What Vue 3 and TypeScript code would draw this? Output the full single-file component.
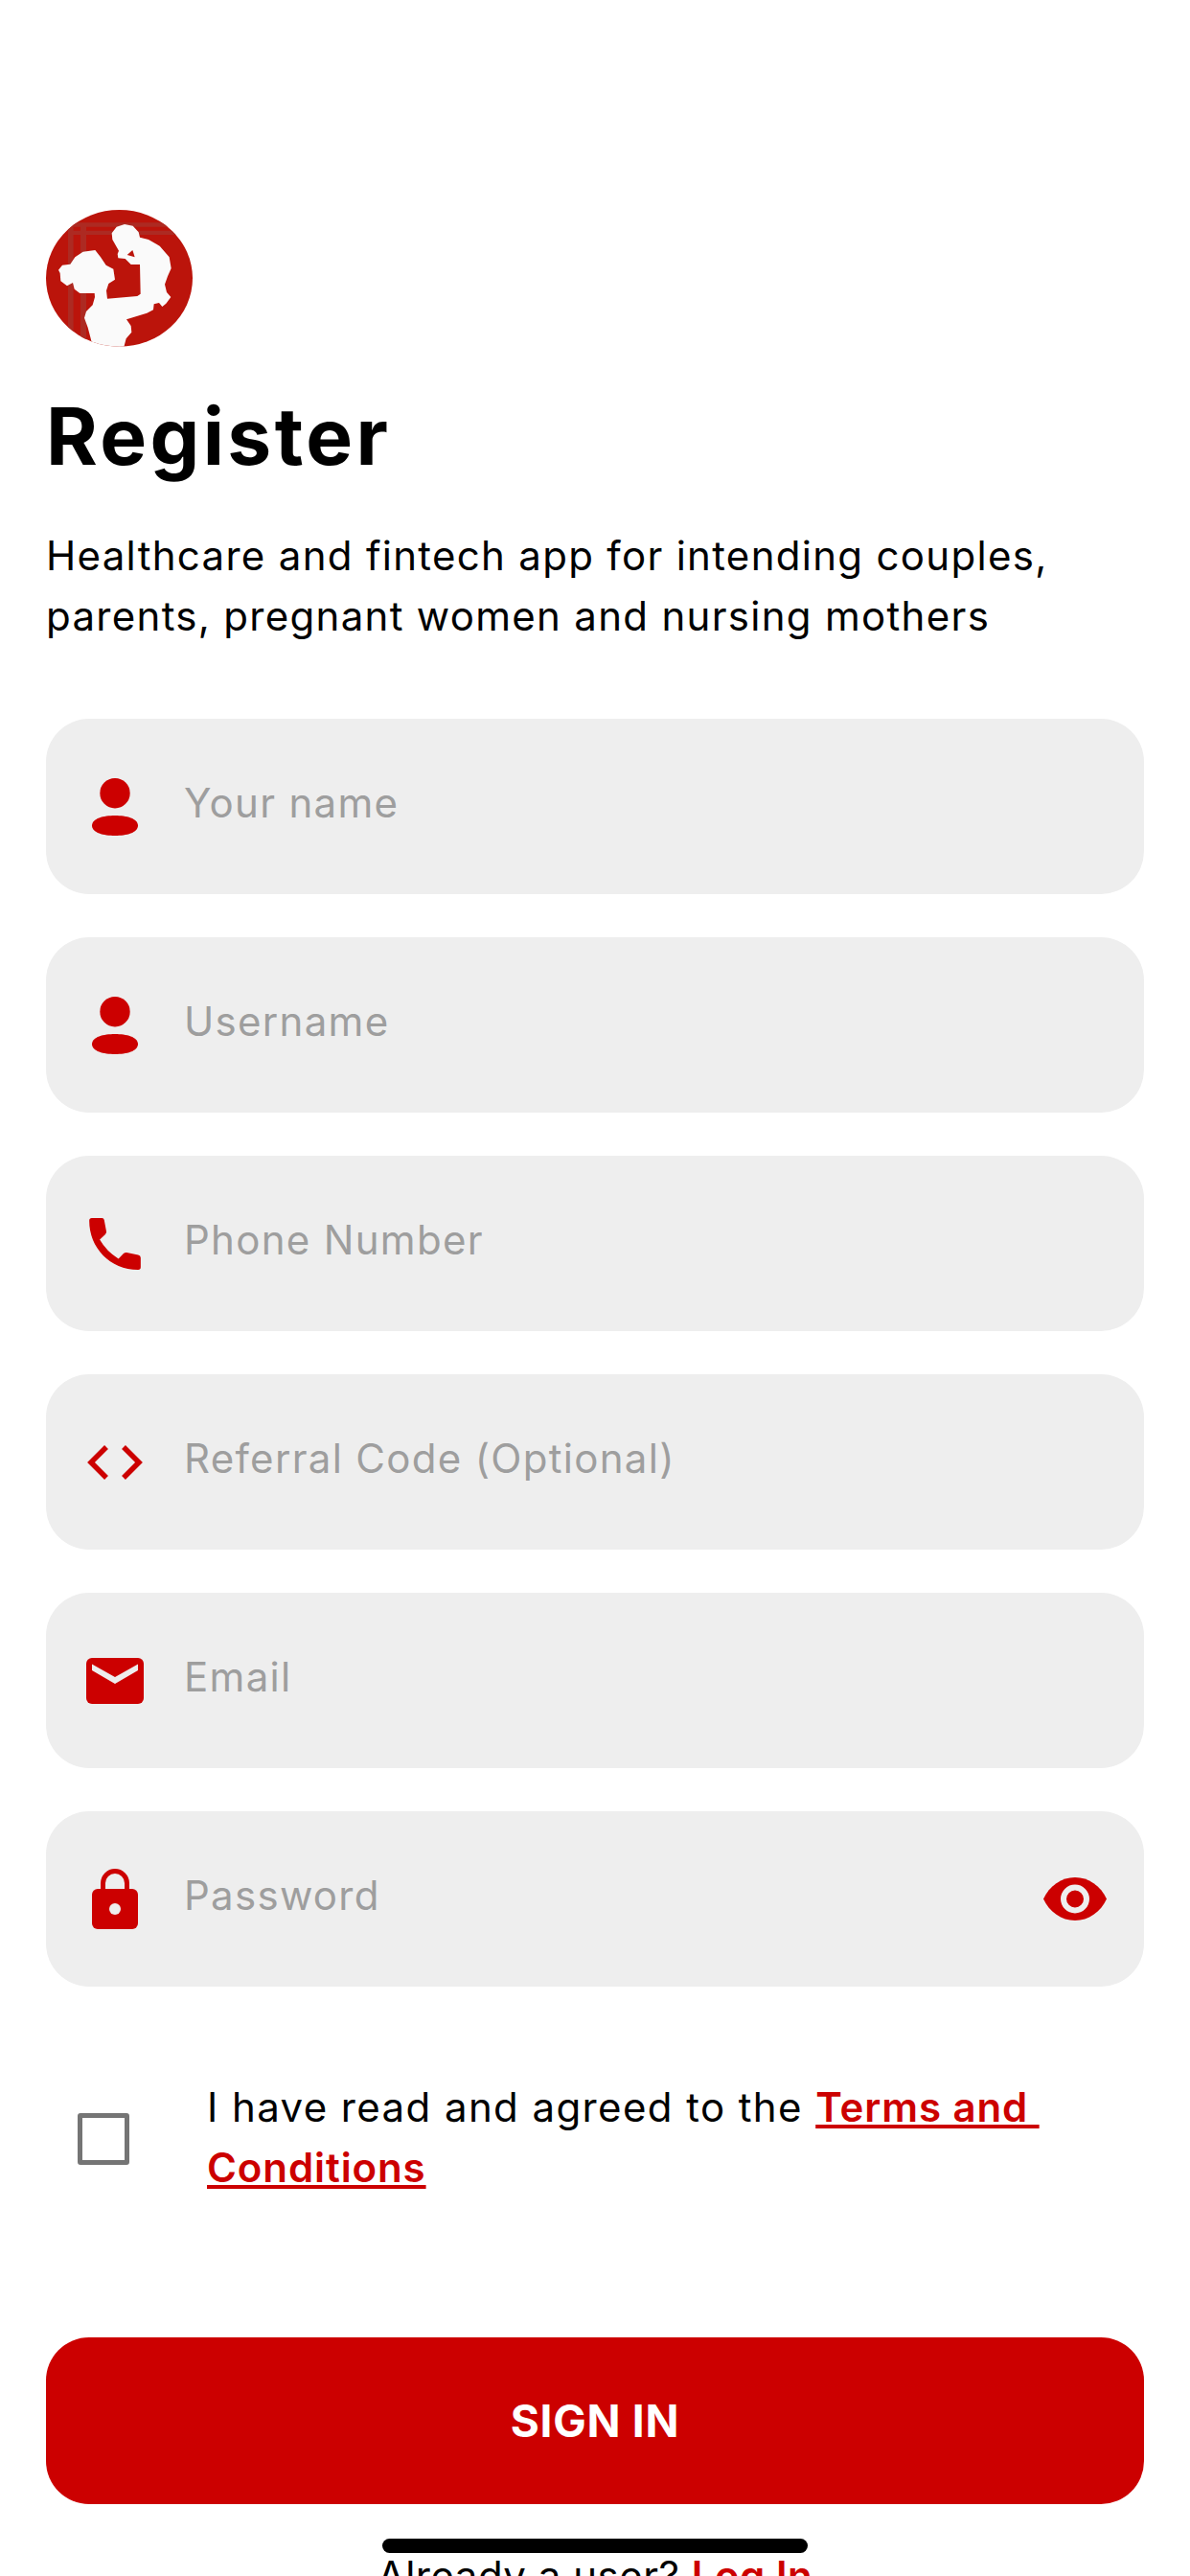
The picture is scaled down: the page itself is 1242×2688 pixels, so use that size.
<script setup lang="ts">
interface Field {
  label: string
  icon: 'person' | 'phone' | 'code' | 'mail' | 'lock'
  eye?: boolean
}

const fields: Field[] = [
  { label: 'Your name', icon: 'person' },
  { label: 'Username', icon: 'person' },
  { label: 'Phone Number', icon: 'phone' },
  { label: 'Referral Code (Optional)', icon: 'code' },
  { label: 'Email', icon: 'mail' },
  { label: 'Password', icon: 'lock', eye: true }
]
</script>

<template>
  <div class="screen">
    <svg class="logo" width="180" height="160" viewBox="0 0 540 480">
      <defs>
        <clipPath id="logo-clip">
          <ellipse cx="253.500" cy="241" rx="229.500" ry="214" />
        </clipPath>
      </defs>
      <g clip-path="url(#logo-clip)">
        <rect width="540" height="480" fill="#bb140b" />
        <path fill="#ad2a22" d="M93 70h17v400H93zM132 70h18v400h-18zM93 67h360v13H93zM93 92h360v13H93z" />
        <path
          fill="#fafafa"
          d="M270 72L296 77L314 97L318 113L345 120L380 140L410 175L416 210L405 235L396 260L402 285L415 300L400 320L388 330L378 318L362 322L360 340L340 350L276 370L290 390L292 410L275 430L267 460L172 460L155 395L144 365L150 345L170 325L177 300L176 288L130 288L113 275L108 255L90 265L70 250L68 225L63 215L75 200L100 197L115 175L140 158L178 153L195 175L212 200L235 212L240 245L220 258L213 280L216 305L310 297L320 290L318 198L290 198L272 180L250 178L248 165L252 155L232 120L230 100L245 80Z"
        />
        <path fill="#bb140b" d="M295 153L302 175L278 168Z" />
      </g>
    </svg>

    <h1 class="title">Register</h1>
    <p class="intro">Healthcare and fintech app for intending couples, parents, pregnant women and nursing mothers</p>

    <div class="fields">
      <div v-for="f in fields" :key="f.label" class="field">
        <span class="field-icon">
          <svg v-if="f.icon === 'person'" width="60" height="60" viewBox="0 0 60 60">
            <circle cx="30" cy="15.700" r="15.700" fill="#cc0000" />
            <path fill="#cc0000" d="M6 49.500C6 42 18 39 30 39S54 42 54 49.500S42 60 30 60S6 57 6 49.500Z" />
          </svg>
          <svg v-else-if="f.icon === 'phone'" width="54" height="54" viewBox="100 122 162 163">
            <path
              fill="#cc0000"
              d="M100 130Q100 122 108 122L140 122Q146 122 147 128L154 165Q154 170 150 174L133 190Q155 228 192 250L208 234Q213 230 218 231L254 238Q262 240 262 247L262 277Q262 285 254 285C165 285 100 215 100 130Z"
            />
          </svg>
          <svg v-else-if="f.icon === 'code'" width="60" height="60" viewBox="0 0 60 60">
            <path fill="none" stroke="#cc0000" stroke-width="5.500" d="M21 14L5 30L21 46M39 14L55 30L39 46" />
          </svg>
          <svg v-else-if="f.icon === 'mail'" width="60" height="48" viewBox="0 0 60 48">
            <rect width="60" height="48" rx="6" fill="#cc0000" />
            <path fill="#eeeeee" d="M6 6.500L30 20L54 6.500V13L30 27L6 13Z" />
          </svg>
          <svg v-else width="48" height="63" viewBox="0 0 48 63">
            <rect y="21" width="48" height="42" rx="6" fill="#cc0000" />
            <path fill="none" stroke="#cc0000" stroke-width="5" d="M11.500 23V15A12.500 12.500 0 0 1 36.500 15V23" />
            <circle cx="24" cy="42" r="6" fill="#eeeeee" />
          </svg>
        </span>
        <span class="field-label">{{ f.label }}</span>
        <svg v-if="f.eye" class="eye" width="66" height="45" viewBox="0 0 66 45">
          <path fill="#cc0000" d="M0 22.500C6 9 19 0 33 0S60 9 66 22.500C60 36 47 45 33 45S6 36 0 22.500Z" />
          <circle cx="33" cy="22.500" r="12" fill="none" stroke="#eeeeee" stroke-width="6" />
        </svg>
      </div>
    </div>

    <div class="terms">
      <span class="checkbox"></span>
      <p class="terms-text">I have read and agreed to the <a class="terms-link">Terms and&nbsp;<wbr>Conditions</a></p>
    </div>

    <button type="button" class="submit">SIGN IN</button>

    <p class="login">Already a user? <a class="login-link">Log In</a></p>
    <div class="home-bar"></div>
  </div>
</template>

<style>
html, body {
  margin: 0;
  background: #ffffff;
}
</style>

<style scoped>
.screen {
  position: relative;
  box-sizing: border-box;
  width: 1242px;
  height: 2688px;
  padding: 210px 48px 0;
  overflow: hidden;
  background: #ffffff;
  font-family: Inter, "Noto Sans", sans-serif;
  color: #000000;
}
.logo {
  display: block;
  margin-left: -8px;
}
.title {
  margin: 36px 0 0;
  font-size: 82px;
  line-height: 100px;
  font-weight: 700;
  letter-spacing: 3.400px;
}
.intro {
  margin: 42px 0 0;
  width: 1100px;
  font-size: 42px;
  line-height: 63px;
  letter-spacing: 1.300px;
}
.fields {
  display: flex;
  flex-direction: column;
  gap: 45px;
  margin-top: 76px;
}
.field {
  display: flex;
  align-items: center;
  height: 183px;
  border-radius: 45px;
  background: #eeeeee;
}
.field-icon {
  display: flex;
  justify-content: center;
  align-items: center;
  flex: none;
  width: 60px;
  margin-left: 42px;
}
.field-label {
  flex: 1;
  margin: -9px 0 0 42px;
  font-size: 42px;
  color: #9e9e9e;
  letter-spacing: 1.300px;
}
.eye {
  flex: none;
  margin-right: 39px;
}
.terms {
  display: flex;
  align-items: center;
  margin-top: 94px;
}
.checkbox {
  flex: none;
  box-sizing: border-box;
  width: 54px;
  height: 54px;
  margin: 4px 0 0 33px;
  border: 5.500px solid #757575;
  border-radius: 3px;
}
.terms-text {
  margin: 0 0 0 81px;
  width: 930px;
  font-size: 42px;
  line-height: 63px;
  letter-spacing: 1.400px;
}
.terms-link {
  color: #cc0000;
  font-weight: 600;
  letter-spacing: 0.900px;
  text-decoration: underline;
}
.submit {
  display: block;
  width: 100%;
  height: 174px;
  margin-top: 146px;
  border: none;
  border-radius: 45px;
  background: #cc0000;
  color: #ffffff;
  font-family: inherit;
  font-size: 46px;
  font-weight: 700;
  letter-spacing: 0.700px;
}
.login {
  margin: 43px 0 0;
  text-align: center;
  font-size: 42px;
  line-height: 63px;
  letter-spacing: 0.500px;
}
.login-link {
  color: #cc0000;
  font-weight: 600;
}
.home-bar {
  position: absolute;
  left: 399px;
  top: 2649px;
  width: 444px;
  height: 15px;
  border-radius: 8px;
  background: #000000;
}
</style>
